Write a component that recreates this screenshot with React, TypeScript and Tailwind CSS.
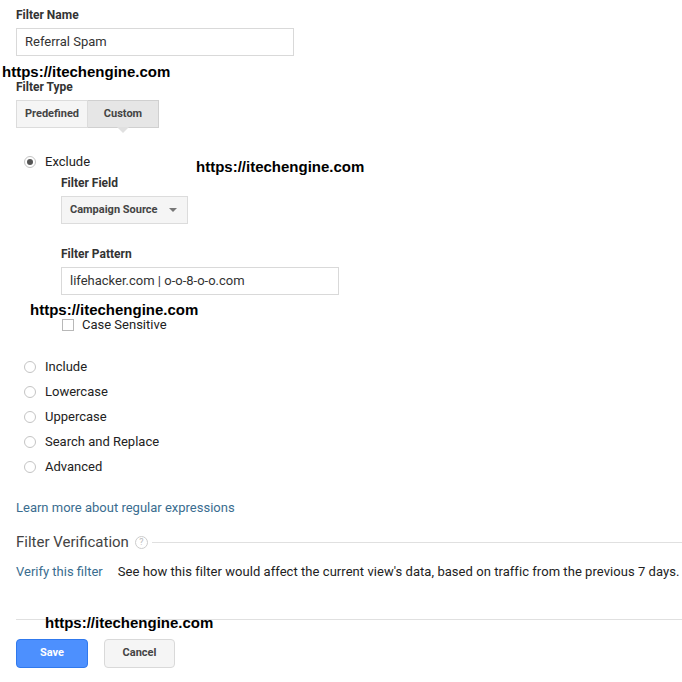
import React from 'react';

const font = { fontFamily: 'Roboto, Arial, sans-serif' };

function Radio({ label, checked = false }: { label: string; checked?: boolean }) {
  return (
    <div className="flex items-center h-4">
      <span className="w-3 h-3 ml-2 rounded-full border border-[#c4c4c4] bg-white flex items-center justify-center">
        {checked && <span className="w-[6px] h-[6px] rounded-full bg-[#555]" />}
      </span>
      <span className="ml-[9px] text-[13px] text-[#222]">{label}</span>
    </div>
  );
}

function Watermark({ className }: { className: string }) {
  return (
    <div
      className={`absolute text-[15px] font-bold text-black leading-none ${className}`}
      style={{ fontFamily: '"Liberation Sans", Arial, sans-serif' }}
    >
      https://itechengine.com
    </div>
  );
}

export default function App() {
  return (
    <main className="relative w-[682px] h-[682px] bg-white overflow-hidden" style={font}>
      <div className="pl-4 pt-[7px]">
        <div className="text-[12px] font-bold text-[#333] leading-4">Filter Name</div>
        <div className="mt-[5px] w-[278px] h-7 border border-[#d9d9d9] flex items-center px-2 text-[13px] text-[#333]">
          Referral Spam
        </div>

        <div className="mt-[23px] text-[12px] font-bold text-[#333] leading-4">Filter Type</div>
        <div className="mt-[5px] flex">
          <div className="w-[72px] h-7 flex items-center justify-center bg-[#f5f5f5] border border-[#dcdcdc] text-[11px] font-bold text-[#444]">
            Predefined
          </div>
          <div className="relative w-[71px] h-7 flex items-center justify-center bg-[#e6e6e6] border border-l-0 border-[#d0d0d0] text-[11px] font-bold text-[#444]">
            Custom
            <span className="absolute left-1/2 -translate-x-1/2 top-full w-0 h-0 border-l-[6px] border-r-[6px] border-t-[6px] border-l-transparent border-r-transparent border-t-[#e0e0e0]" />
          </div>
        </div>

        <div className="mt-[26px] -ml-4">
          <div className="pl-4">
            <Radio label="Exclude" checked />
          </div>
          <div className="pl-[61px]">
            <div className="mt-[5px] text-[12px] font-bold text-[#333] leading-4">Filter Field</div>
            <div className="mt-[5px] w-[127px] h-7 bg-[#f5f5f5] border border-[#dcdcdc] flex items-center justify-between pl-2 pr-[10px]">
              <span className="text-[11px] font-bold text-[#444]">Campaign Source</span>
              <span className="w-0 h-0 border-l-[4px] border-r-[4px] border-t-[4px] border-l-transparent border-r-transparent border-t-[#777]" />
            </div>

            <div className="mt-[22px] text-[12px] font-bold text-[#333] leading-4">Filter Pattern</div>
            <div className="mt-[5px] w-[278px] h-7 border border-[#d9d9d9] flex items-center px-2 text-[13px] text-[#333]">
              lifehacker.com | o-o-8-o-o.com
            </div>

            <div className="mt-[22px] flex items-center h-4">
              <span className="w-3 h-3 ml-px border border-[#b8b8b8] bg-white" />
              <span className="ml-2 text-[13px] text-[#222]">Case Sensitive</span>
            </div>
          </div>
        </div>

        <div className="mt-[26px] -ml-4 pl-4 flex flex-col gap-[9px]">
          <Radio label="Include" />
          <Radio label="Lowercase" />
          <Radio label="Uppercase" />
          <Radio label="Search and Replace" />
          <Radio label="Advanced" />
        </div>

        <div className="mt-[25px] text-[13px] text-[#3a6d8f] leading-4">Learn more about regular expressions</div>

        <div className="mt-[17px] flex items-center h-[18px]">
          <span className="text-[15px] text-[#444]">Filter Verification</span>
          <span className="ml-[6px] w-[13px] h-[13px] rounded-full border border-[#ccc] flex items-center justify-center text-[9px] text-[#bbb] leading-none">
            ?
          </span>
          <span className="ml-[4px] flex-1 h-px bg-[#e0e0e0]" />
        </div>

        <div className="mt-[13px] flex items-center h-4 text-[13px] whitespace-nowrap">
          <span className="text-[#3a6d8f]">Verify this filter</span>
          <span className="ml-[15px] text-[#222] tracking-[0.05px]">
            See how this filter would affect the current view's data, based on traffic from the previous 7 days.
          </span>
        </div>

        <div className="mt-[39px] h-px bg-[#e0e0e0]" />

        <div className="mt-[19px] flex gap-4">
          <div className="w-[72px] h-[29px] rounded-sm bg-[#4d90fe] border border-[#3079ed] flex items-center justify-center text-[11px] font-bold text-white">
            Save
          </div>
          <div className="w-[71px] h-[29px] rounded-sm bg-[#f5f5f5] border border-[#d9d9d9] flex items-center justify-center text-[11px] font-bold text-[#444]">
            Cancel
          </div>
        </div>
      </div>

      <Watermark className="left-[2px] top-[64px]" />
      <Watermark className="left-[196px] top-[159px]" />
      <Watermark className="left-[30px] top-[302px]" />
      <Watermark className="left-[45px] top-[615px]" />
    </main>
  );
}
